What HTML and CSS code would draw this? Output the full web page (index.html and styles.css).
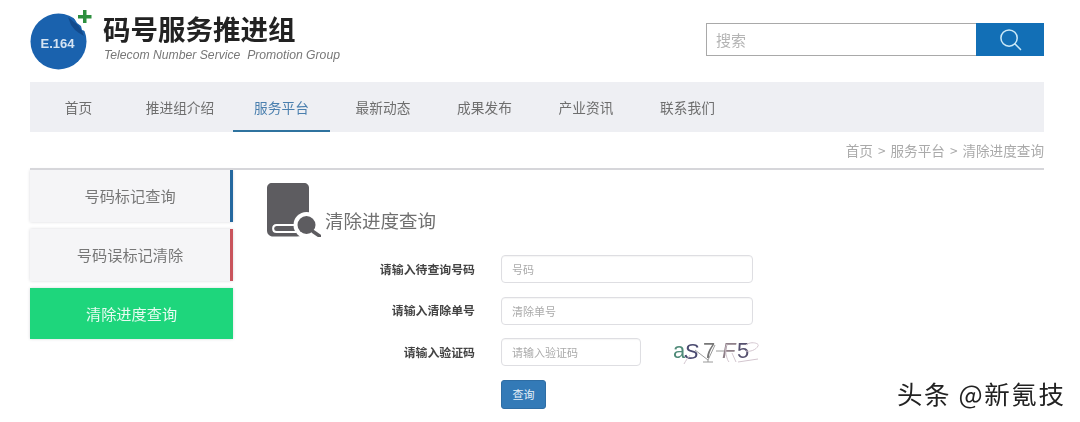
FILE: index.html
```html
<!DOCTYPE html>
<html lang="zh-CN">
<head>
  <meta charset="UTF-8" />
  <title>清除进度查询 - 码号服务推进组</title>
  <link rel="stylesheet" href="styles.css">
</head>
<body>

<div class="page">
  <header class="top">
    <div class="brand">
      <svg class="logo" viewBox="0 0 66 62" width="66" height="62">
        <circle cx="28.500" cy="28.500" r="28" fill="#1a62ae"/>
        <path d="M38 4L44 9L48 12L52 18L54 23L49 20L45 17L41 12Z" fill="#124a8c"/>
        <path d="M47 3L58 14V22L55 18L52 17L51 13L47 10L44 5Z" fill="#fff"/>
        <path d="M53 -3H56.500V2H61.500V5.500H56.500V10H53V5.500H48V2H53Z" fill="#2d8f3e"/>
        <text x="10.500" y="35" class="logo-text">E.164</text>
      </svg>
      <div class="brand-name">
        <h1>码号服务推进组</h1>
        <p>Telecom Number Service&nbsp; Promotion Group</p>
      </div>
    </div>
    <form class="search">
      <input type="text" placeholder="搜索" />
      <button type="button" aria-label="搜索">
        <svg viewBox="0 0 24 24" width="23" height="23">
          <circle cx="10.500" cy="10.500" r="8.500" />
          <path d="M16.500 16.500L22.500 22.500" />
        </svg>
      </button>
    </form>
  </header>

  <nav class="nav">
    <a href="#">首页</a>
    <a href="#">推进组介绍</a>
    <a href="#" class="active">服务平台</a>
    <a href="#">最新动态</a>
    <a href="#">成果发布</a>
    <a href="#">产业资讯</a>
    <a href="#">联系我们</a>
  </nav>

  <div class="crumbs">首页<span>&gt;</span>服务平台<span>&gt;</span>清除进度查询</div>

  <div class="content">
    <aside class="side">
      <a href="#" class="side-item blue">号码标记查询</a>
      <a href="#" class="side-item red">号码误标记清除</a>
      <a href="#" class="side-item current">清除进度查询</a>
    </aside>

    <main class="main">
      <div class="main-title">
        <svg class="book" viewBox="0 0 54 54" width="54" height="54">
          <path d="M5 0H37C40 0 42 2 42 5V40C42 50 36 53.500 30 53.500H6C2.500 53.500 0 51 0 47.500V5C0 2 2 0 5 0Z" fill="#5d5c60"/>
          <circle cx="39.500" cy="42" r="13" fill="#fff"/>
          <path d="M29 42H9.500C5 42 5 49 9.500 49H29" fill="none" stroke="#fff" stroke-width="2"/>
          <circle cx="39.500" cy="42" r="9" fill="#5d5c60"/>
          <path d="M46 48.500L52.500 53" stroke="#5d5c60" stroke-width="3.500" stroke-linecap="round"/>
        </svg>
        <h2>清除进度查询</h2>
      </div>

      <form class="query">
        <div class="row">
          <label>请输入待查询号码</label>
          <input type="text" placeholder="号码" />
        </div>
        <div class="row">
          <label>请输入清除单号</label>
          <input type="text" placeholder="清除单号" />
        </div>
        <div class="row">
          <label>请输入验证码</label>
          <input type="text" class="short" placeholder="请输入验证码" />
          <svg class="captcha" viewBox="0 0 88 28" width="88" height="28">
            <text x="1" y="20" class="cap-a">a</text>
            <text x="12" y="21" class="cap-s">S</text>
            <text x="31" y="20" class="cap-7">7</text>
            <text x="50" y="20" class="cap-f">F</text>
            <text x="65" y="20" class="cap-5">5</text>
            <path d="M23 12L36 22L43 7M31 24H41M36 22V24M44 13H52" class="cap-line"/>
            <path d="M12 26C14 22 16 20 18 17M55 6C52 12 55 22 57 24M60 15L64 24M74 7C78 3 88 5 86 8C84 12 78 14 74 13M66 24L86 21" class="cap-line2"/>
          </svg>
        </div>
        <div class="row">
          <button type="button" class="btn">查询</button>
        </div>
      </form>
    </main>
  </div>
</div>

<div class="mark">头条 @新氪技</div>

</body>
</html>
```

FILE: styles.css
```css
html, body {
  margin: 0;
  padding: 0;
  height: 422px;
  overflow: hidden;
  background: #ffffff;
}
body {
  font-family: "Noto Sans CJK SC", "Liberation Sans", sans-serif;
  color: #666;
  position: relative;
}
a {
  text-decoration: none;
  color: inherit;
}
.page {
  width: 1014px;
  margin-left: 30px;
  filter: blur(0.5px);
}

/* header */
.top {
  height: 82px;
  display: flex;
  justify-content: space-between;
}
.brand {
  display: flex;
  padding-top: 8px;
}
.logo {
  overflow: visible;
  margin-top: 5px;
  flex: none;
}
.logo-text {
  font-family: "Liberation Sans", sans-serif;
  font-size: 13px;
  font-weight: bold;
  fill: #d5e3f2;
}
.brand-name {
  margin-left: 7px;
}
.brand-name h1 {
  margin: 0;
  font-size: 27.5px;
  line-height: 40px;
  font-weight: 700;
  color: #222;
}
.brand-name p {
  margin: -2px 0 0 1px;
  font-family: "Liberation Sans", sans-serif;
  font-style: italic;
  font-size: 12.2px;
  line-height: 18px;
  color: #777;
}
.search {
  display: flex;
  width: 338px;
  height: 33px;
  margin-top: 23px;
}
.search input {
  flex: 1;
  min-width: 0;
  box-sizing: border-box;
  border: 1px solid #a9a9a9;
  border-right: none;
  padding: 0 9px;
  font-family: inherit;
  font-size: 15px;
  outline: none;
}
.search input::placeholder {
  color: #b4b4b4;
}
.search button {
  width: 68px;
  border: none;
  padding: 0;
  background: #126fb6;
  display: flex;
  align-items: center;
  justify-content: center;
}
.search svg {
  fill: none;
  stroke: #c9e8f7;
  stroke-width: 1.6;
  stroke-linecap: round;
}

/* nav */
.nav {
  height: 50px;
  display: flex;
  gap: 4.5px;
  background: #eeeff3;
}
.nav a {
  box-sizing: border-box;
  width: 97px;
  height: 50px;
  line-height: 50px;
  text-align: center;
  font-size: 13.7px;
  color: #6e6e6e;
}
.nav a.active {
  color: #4a7fae;
  border-bottom: 2.5px solid #2f739f;
}

.crumbs {
  height: 38px;
  line-height: 37px;
  box-sizing: border-box;
  border-bottom: 2px solid #d6d6da;
  text-align: right;
  font-size: 13.6px;
  color: #aaa;
}
.crumbs span {
  margin: 0 5px;
}

/* content */
.content {
  display: flex;
}
.side {
  width: 203px;
  flex: none;
  display: flex;
  flex-direction: column;
}
.side-item {
  box-sizing: border-box;
  height: 52px;
  line-height: 50px;
  margin-bottom: 7px;
  text-align: center;
  font-size: 15.2px;
  color: #777;
  background: #f5f5f7;
  box-shadow: 0 0 3px #d8d8dc;
}
.side-item.blue {
  border-right: 3px solid #24689f;
}
.side-item.red {
  border-right: 3px solid #c9545c;
}
.side-item.current {
  height: 51px;
  line-height: 51px;
  background: #1ed67c;
  color: #e8fbf1;
}
.main {
  flex: 1;
  margin-left: 34px;
  padding-top: 13px;
}
.main-title {
  display: flex;
  align-items: flex-end;
}
.book {
  flex: none;
}
.main-title h2 {
  margin: 0 0 3px 4px;
  font-size: 18.5px;
  line-height: 28px;
  font-weight: 400;
  color: #707070;
}

/* form */
.query {
  margin-top: 18px;
  display: flex;
  flex-direction: column;
  gap: 13.5px;
}
.row {
  display: flex;
  align-items: center;
  padding-left: 234px;
}
.row label {
  width: 120px;
  margin-left: -146px;
  margin-right: 26px;
  padding-bottom: 2px;
  text-align: right;
  font-size: 11.9px;
  font-weight: 700;
  color: #444;
}
.row input {
  box-sizing: border-box;
  width: 252px;
  height: 28px;
  border: 1px solid #dedee2;
  border-radius: 4px;
  padding: 0 10px;
  font-family: inherit;
  font-size: 11px;
  outline: none;
  box-shadow: inset 0 1px 1px rgba(0, 0, 0, 0.04);
}
.row input.short {
  width: 140px;
}
.row input::placeholder {
  color: #aaa;
}
.captcha {
  margin-left: 31px;
  flex: none;
}
.captcha text {
  font-family: "Liberation Sans", sans-serif;
  font-size: 22px;
}
.cap-a {
  fill: #4f8a78;
}
.cap-s {
  fill: #4a4a70;
  font-style: italic;
}
.cap-7 {
  fill: #777;
}
.cap-f {
  fill: #8f8089;
  font-style: italic;
}
.cap-5 {
  fill: #55506e;
}
.cap-line, .cap-line2 {
  fill: none;
  stroke-width: 1;
}
.cap-line {
  stroke: #9a9a9a;
}
.cap-line2 {
  stroke: #d3c6cf;
}
.btn {
  width: 45px;
  height: 29px;
  border: 1px solid #2e6da4;
  border-radius: 3px;
  padding: 0;
  background: #337ab7;
  color: #e6f0f8;
  font-family: inherit;
  font-size: 11px;
}

/* site watermark, sits over the screenshot */
.mark {
  position: absolute;
  left: 897px;
  top: 376px;
  font-size: 25.5px;
  letter-spacing: 1.6px;
  line-height: 34px;
  color: #222;
}
```
